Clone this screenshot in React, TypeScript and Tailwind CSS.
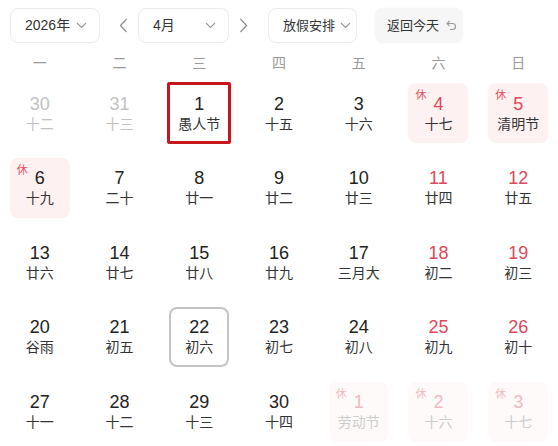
import React from "react";

type Day = {
  n: number;
  l: string;
  kind?: "out" | "weekend";
  rest?: boolean;
  faded?: boolean;
  selected?: boolean;
  today?: boolean;
};

const days: Day[] = [
  { n: 30, l: "十二", kind: "out" },
  { n: 31, l: "十三", kind: "out" },
  { n: 1, l: "愚人节", selected: true },
  { n: 2, l: "十五" },
  { n: 3, l: "十六" },
  { n: 4, l: "十七", rest: true, kind: "weekend" },
  { n: 5, l: "清明节", rest: true, kind: "weekend" },
  { n: 6, l: "十九", rest: true },
  { n: 7, l: "二十" },
  { n: 8, l: "廿一" },
  { n: 9, l: "廿二" },
  { n: 10, l: "廿三" },
  { n: 11, l: "廿四", kind: "weekend" },
  { n: 12, l: "廿五", kind: "weekend" },
  { n: 13, l: "廿六" },
  { n: 14, l: "廿七" },
  { n: 15, l: "廿八" },
  { n: 16, l: "廿九" },
  { n: 17, l: "三月大" },
  { n: 18, l: "初二", kind: "weekend" },
  { n: 19, l: "初三", kind: "weekend" },
  { n: 20, l: "谷雨" },
  { n: 21, l: "初五" },
  { n: 22, l: "初六", today: true },
  { n: 23, l: "初七" },
  { n: 24, l: "初八" },
  { n: 25, l: "初九", kind: "weekend" },
  { n: 26, l: "初十", kind: "weekend" },
  { n: 27, l: "十一" },
  { n: 28, l: "十二" },
  { n: 29, l: "十三" },
  { n: 30, l: "十四" },
  { n: 1, l: "劳动节", rest: true, faded: true },
  { n: 2, l: "十六", rest: true, faded: true },
  { n: 3, l: "十七", rest: true, faded: true },
];

const weekdays = ["一", "二", "三", "四", "五", "六", "日"];

const Chevron = () => (
  <svg width="11" height="7" viewBox="0 0 11 7" fill="none">
    <polyline points="1,1 5.5,5.5 10,1" stroke="#9a9a9a" strokeWidth="1.1" />
  </svg>
);

const Arrow = ({ dir }: { dir: "l" | "r" }) => (
  <svg width="9" height="15" viewBox="0 0 9 15" fill="none">
    {dir === "l" ? (
      <polyline points="7.5,1 1.5,7.5 7.5,14" stroke="#8a8a8a" strokeWidth="1.2" />
    ) : (
      <polyline points="1.5,1 7.5,7.5 1.5,14" stroke="#8a8a8a" strokeWidth="1.2" />
    )}
  </svg>
);

const UndoIcon = () => (
  <svg width="11" height="11" viewBox="0 0 11 11" fill="none">
    <path d="M3.5 1 L1 3.5 L3.5 6" stroke="#9a9a9a" strokeWidth="1.1" />
    <path d="M1 3.5 H6.5 A3 3 0 0 1 6.5 9.5 H4" stroke="#9a9a9a" strokeWidth="1.1" />
  </svg>
);

function Cell({ d }: { d: Day }) {
  let numColor = "text-[#222222]";
  let lunarColor = "text-[#333333]";
  if (d.kind === "out") {
    numColor = "text-[#c2c2c2]";
    lunarColor = "text-[#c2c2c2]";
  } else if (d.faded) {
    numColor = "text-[#f1b9bf]";
    lunarColor = "text-[#cccccc]";
  } else if (d.kind === "weekend") {
    numColor = "text-[#e1475a]";
  }

  let box = "w-[60px] h-[60px] rounded-[8px]";
  if (d.selected) box = "w-[64px] h-[62px] rounded-[2px] border-[3px] border-[#c8161e]";
  else if (d.today) box = "w-[60px] h-[60px] rounded-[8px] border-2 border-[#c4c4c4]";
  else if (d.rest && d.faded) box = "w-[60px] h-[60px] rounded-[8px] bg-[#fefafa]";
  else if (d.rest) box = "w-[60px] h-[60px] rounded-[8px] bg-[#fdf1f1]";

  return (
    <div className="h-[60px] flex items-center justify-center">
      <div className={`relative shrink-0 flex flex-col items-center justify-center ${box}`}>
        {d.rest && (
          <span
            className={`absolute left-[7px] top-[7px] text-[11px] leading-none ${
              d.faded ? "text-[#f4b9bf]" : "text-[#e5535e]"
            }`}
          >
            休
          </span>
        )}
        <span className={`text-[18px] leading-[20px] ${numColor}`}>{d.n}</span>
        <span className={`text-[14px] leading-[18px] mt-[1px] ${lunarColor}`}>{d.l}</span>
      </div>
    </div>
  );
}

export default function App() {
  return (
    <div
      className="w-[558px] h-[446px] bg-white overflow-hidden"
      style={{ fontFamily: '"Liberation Sans", "Noto Sans CJK SC", sans-serif' }}
    >
      <div className="flex items-center pt-[8px] h-[43px] text-[14px] text-[#333333]">
        <div className="ml-[10px] w-[90px] h-[35px] border border-[#ececec] rounded-[8px] flex items-center justify-between pl-[14px] pr-[12px]">
          <span>2026年</span>
          <Chevron />
        </div>
        <div className="ml-[18px] w-[10px] flex justify-center">
          <Arrow dir="l" />
        </div>
        <div className="ml-[10px] w-[91px] h-[35px] border border-[#ececec] rounded-[8px] flex items-center justify-between pl-[14px] pr-[12px]">
          <span>4月</span>
          <Chevron />
        </div>
        <div className="ml-[9px] w-[10px] flex justify-center">
          <Arrow dir="r" />
        </div>
        <div className="ml-[20px] w-[89px] h-[35px] border border-[#ececec] rounded-[8px] flex items-center justify-between pl-[14px] pr-[5px] text-[13px]">
          <span>放假安排</span>
          <Chevron />
        </div>
        <div className="ml-[18px] w-[88px] h-[35px] bg-[#f6f6f6] rounded-[8px] flex items-center pl-[12px] gap-[7px] text-[13px] shadow-[0_0_3px_rgba(0,0,0,0.04)]">
          <span>返回今天</span>
          <UndoIcon />
        </div>
      </div>
      <div className="grid grid-cols-7 h-[40px] items-center text-[14px] text-[#9a9a9a]">
        {weekdays.map((w) => (
          <div key={w} className="text-center">
            {w}
          </div>
        ))}
      </div>
      <div className="grid grid-cols-7 gap-y-[14.67px]">
        {days.map((d, i) => (
          <Cell key={i} d={d} />
        ))}
      </div>
    </div>
  );
}
